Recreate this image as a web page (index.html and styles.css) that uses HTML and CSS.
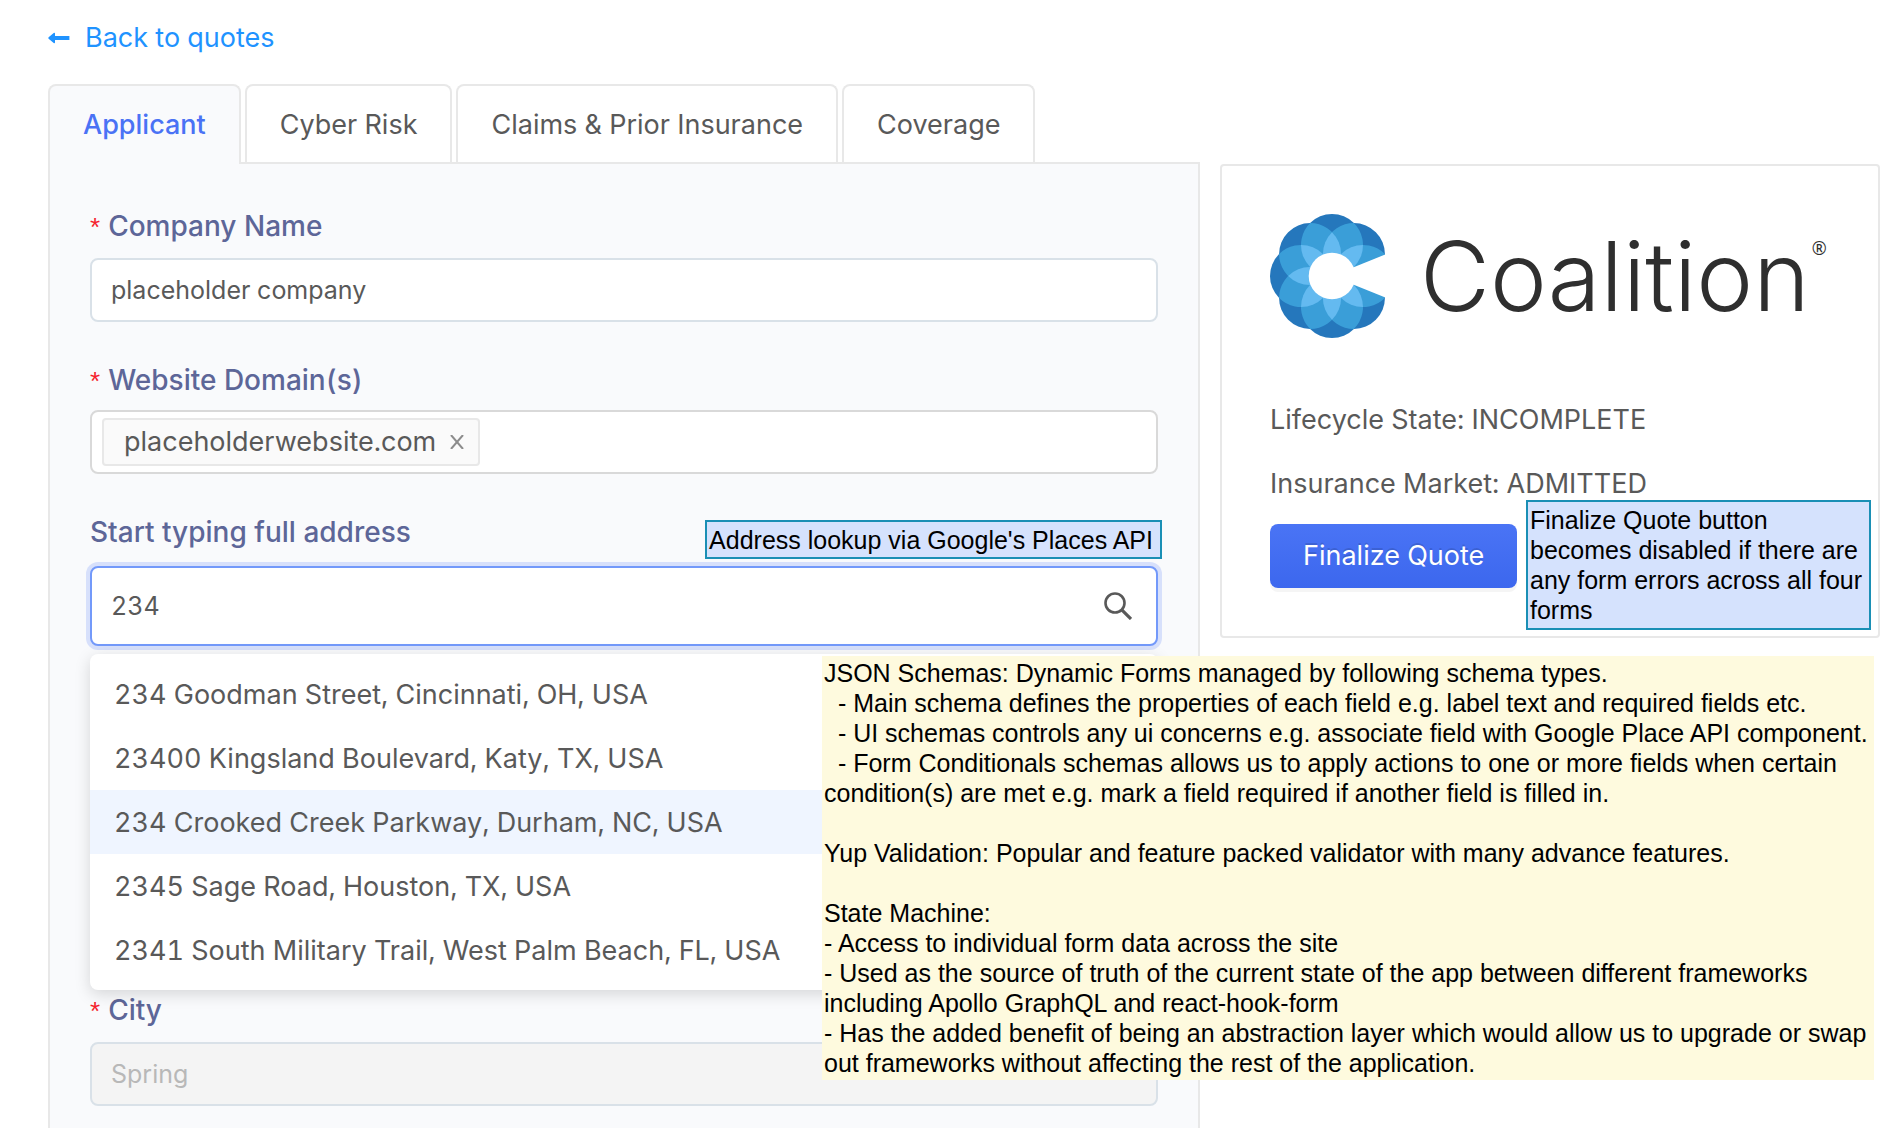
FILE: index.html
```html
<!DOCTYPE html>
<html lang="en">
<head>
<meta charset="utf-8">
<meta name="viewport" content="width=device-width, initial-scale=1">
<title>Quote application</title>
<link rel="stylesheet" href="styles.css">
</head>
<body>
<header class="page-header">
  <a class="back-link" href="#quotes">
    <svg class="back-icon" viewBox="0 0 22 12" aria-hidden="true"><path d="M6 0.8 0.6 5.2Q0 6 0.6 6.8L6 11.2Q7 11.4 7 10.4V8H21.4V4H7V1.6Q7 0.6 6 0.8Z" fill="currentColor"/></svg>
    Back to quotes
  </a>
</header>
<main class="layout">
  <section class="application">
    <nav class="tabs" role="tablist">
      <button class="tab tab-active" type="button" role="tab" aria-selected="true">Applicant</button>
      <button class="tab" type="button" role="tab" aria-selected="false">Cyber Risk</button>
      <button class="tab" type="button" role="tab" aria-selected="false">Claims &amp; Prior Insurance</button>
      <button class="tab" type="button" role="tab" aria-selected="false">Coverage</button>
    </nav>
    <form class="panel">
      <div class="field">
        <label class="label required" for="company">Company Name</label>
        <input class="control" id="company" type="text" value="placeholder company">
      </div>
      <div class="field field-domains">
        <label class="label required" for="domains">Website Domain(s)</label>
        <div class="control tag-control">
          <span class="tag">placeholderwebsite.com
            <button class="tag-remove" type="button" aria-label="Remove placeholderwebsite.com">
              <svg viewBox="0 0 14 14" aria-hidden="true"><path d="M1 0 13 14M13 0 1 14" stroke="currentColor" stroke-width="2" fill="none"/></svg>
            </button>
          </span>
          <input class="tag-input" id="domains" type="text">
        </div>
      </div>
      <div class="field field-address">
        <label class="label" for="address">Start typing full address</label>
        <div class="search-control">
          <input class="search-input" id="address" type="text" value="234">
          <svg class="search-icon" viewBox="0 0 28 28" aria-hidden="true"><circle cx="11" cy="11" r="9.5" fill="none" stroke="currentColor" stroke-width="2.6"/><path d="M17.8 17.8 27 27" stroke="currentColor" stroke-width="3.2"/></svg>
          <ul class="suggestions" role="listbox">
            <li class="suggestion" role="option">234 Goodman Street, Cincinnati, OH, USA</li>
            <li class="suggestion" role="option">23400 Kingsland Boulevard, Katy, TX, USA</li>
            <li class="suggestion suggestion-active" role="option">234 Crooked Creek Parkway, Durham, NC, USA</li>
            <li class="suggestion" role="option">2345 Sage Road, Houston, TX, USA</li>
            <li class="suggestion" role="option">2341 South Military Trail, West Palm Beach, FL, USA</li>
          </ul>
        </div>
        <p class="note note-blue note-address">Address lookup via Google's Places API</p>
      </div>
      <div class="field">
        <label class="label required" for="city">City</label>
        <input class="control" id="city" type="text" value="Spring" disabled>
      </div>
    </form>
  </section>
  <aside class="summary">
    <div class="logo">
      <svg class="logo-mark" viewBox="-62 -62 124 124" aria-hidden="true">
        <defs>
          <circle id="petal" cx="31" cy="0" r="31"/>
          <path id="overlap" d="M0 0A31 31 0 0 1 57.28 0A31 31 0 0 1 0 0Z"/>
          <path id="core" d="M0 0A31 31 0 0 1 43.84 0A31 31 0 0 1 0 0Z"/>
        </defs>
        <g fill="#2577bc">
          <use href="#petal" transform="rotate(45)"/><use href="#petal" transform="rotate(90)"/><use href="#petal" transform="rotate(135)"/><use href="#petal" transform="rotate(180)"/><use href="#petal" transform="rotate(225)"/><use href="#petal" transform="rotate(270)"/><use href="#petal" transform="rotate(315)"/>
        </g>
        <g fill="#3a9ed8">
          <use href="#overlap" transform="rotate(22.5)"/><use href="#overlap" transform="rotate(67.5)"/><use href="#overlap" transform="rotate(112.5)"/><use href="#overlap" transform="rotate(157.5)"/><use href="#overlap" transform="rotate(202.5)"/><use href="#overlap" transform="rotate(247.5)"/><use href="#overlap" transform="rotate(292.5)"/><use href="#overlap" transform="rotate(337.5)"/>
        </g>
        <g fill="#64baf0">
          <use href="#core" transform="rotate(45)"/><use href="#core" transform="rotate(90)"/><use href="#core" transform="rotate(135)"/><use href="#core" transform="rotate(180)"/><use href="#core" transform="rotate(225)"/><use href="#core" transform="rotate(270)"/><use href="#core" transform="rotate(315)"/>
        </g>
        <circle r="23.3" fill="#fff"/>
        <path d="M0 0 70 -28.3V28.3Z" fill="#fff"/>
      </svg>
      <span class="logo-name">Coalition</span><span class="logo-reg">®</span>
    </div>
    <p class="fact">Lifecycle State: INCOMPLETE</p>
    <p class="fact">Insurance Market: ADMITTED</p>
    <button class="finalize" type="button">Finalize Quote</button>
    <p class="note note-blue note-finalize">Finalize Quote button becomes disabled if there are any form errors across all four forms</p>
  </aside>
  <div class="note note-yellow">JSON Schemas: Dynamic Forms managed by following schema types.
  - Main schema defines the properties of each field e.g. label text and required fields etc.
  - UI schemas controls any ui concerns e.g. associate field with Google Place API component.
  - Form Conditionals schemas allows us to apply actions to one or more fields when certain condition(s) are met e.g. mark a field required if another field is filled in.

Yup Validation: Popular and feature packed validator with many advance features.

State Machine:
- Access to individual form data across the site
- Used as the source of truth of the current state of the app between different frameworks including Apollo GraphQL and react-hook-form
- Has the added benefit of being an abstraction layer which would allow us to upgrade or swap out frameworks without affecting the rest of the application.</div>
</main>
</body>
</html>
```
FILE: styles.css
```css
* { box-sizing: border-box; }

body {
  margin: 0;
  min-height: 100vh;
  display: flex;
  flex-direction: column;
  background: #fff;
  color: #595959;
  font-family: Inter, "Open Sans", sans-serif;
  font-size: 27px;
  font-variant-numeric: tabular-nums;
  line-height: 44px;
}

button, input {
  font: inherit;
  font-variant-numeric: tabular-nums;
  color: inherit;
}

p, ul { margin: 0; padding: 0; }

.page-header { display: flex; padding: 16px 48px 24px; }

.back-link {
  display: flex;
  align-items: center;
  gap: 15px;
  color: #1f93ff;
  text-decoration: none;
}

.back-icon { width: 22px; height: 12px; }

.layout {
  position: relative;
  flex: 1;
  display: grid;
  grid-template-columns: minmax(0, 96fr) minmax(0, 55fr);
  gap: 20px;
  padding: 0 18px 0 48px;
}

.application { display: flex; flex-direction: column; }

/* Tabs */
.tabs { display: flex; gap: 4px; }

.tab {
  height: 78px;
  padding: 2px 33px 0;
  border: 2px solid #e8e8e8;
  border-bottom: 0;
  border-radius: 8px 8px 0 0;
  background: #fff;
  white-space: nowrap;
}

.tab-active {
  position: relative;
  height: 80px;
  margin-bottom: -2px;
  padding-top: 0;
  background: #f9fafc;
  color: #4a72f5;
  font-weight: 500;
}

/* Form */
.panel {
  flex: 1;
  padding: 40px 40px 22px;
  border: 2px solid #e8e8e8;
  border-bottom: 0;
  background: #f9fafc;
}

.field { display: flex; flex-direction: column; gap: 10px; }
.field-domains { margin-top: 36px; gap: 8px; }
.field-address { position: relative; margin: 36px 0 342px; gap: 12px; }

.label { height: 44px; color: #5d6698; font-size: 28px; font-weight: 500; }

.required::before {
  content: "*";
  margin-right: 8px;
  color: #f5222d;
  font-family: "Liberation Sans", Arial, sans-serif;
  font-size: 26px;
  font-weight: 400;
  line-height: 1;
}

.control {
  width: 100%;
  height: 64px;
  padding: 0 19px;
  border: 2px solid #d9e1e8;
  border-radius: 8px;
  background: #fff;
  font-size: 25px;
}

.control:disabled { background: #f4f4f4; color: #b8b8b8; }

.tag-control {
  display: flex;
  align-items: center;
  padding: 0 10px;
  border-color: #d9d9d9;
  font-size: 27px;
}

.tag {
  display: flex;
  align-items: center;
  gap: 14px;
  height: 48px;
  padding: 0 14px 0 20px;
  border: 2px solid #e8e8e8;
  border-radius: 4px;
  background: #fafafa;
}

.tag-remove {
  display: flex;
  padding: 0;
  border: 0;
  background: none;
  color: #8c8c8c;
}

.tag-remove svg { width: 14px; height: 14px; }

.tag-input {
  flex: 1;
  min-width: 0;
  border: 0;
  outline: 0;
  background: none;
}

.search-control {
  position: relative;
  display: flex;
  align-items: center;
  height: 80px;
  padding: 0 24px 0 19px;
  border: 2px solid #7399fa;
  border-radius: 8px;
  background: #fff;
  box-shadow: 0 0 0 4px #d7e0fb;
}

.search-input {
  flex: 1;
  min-width: 0;
  padding: 0;
  border: 0;
  outline: 0;
  background: none;
  font-size: 25px;
}

.search-icon { width: 28px; height: 28px; }

.suggestions {
  position: absolute;
  top: 86px;
  left: -2px;
  right: -2px;
  padding: 8px 0;
  border-radius: 8px;
  background: #fff;
  box-shadow: 0 4px 16px rgba(0, 0, 0, 0.15);
  list-style: none;
}

.suggestion { padding: 11px 24px 9px; }
.suggestion-active { background: #eff5ff; }

/* Summary card */
.summary {
  position: relative;
  align-self: start;
  margin-top: 80px;
  padding: 48px;
  border: 2px solid #e8e8e8;
  border-radius: 4px;
}

.logo {
  display: flex;
  align-items: center;
  height: 124px;
  margin-bottom: 50px;
  color: #2f2f2f;
}

.logo-mark { flex: none; width: 124px; height: 124px; }

.logo-name {
  margin-left: 26px;
  font-family: Inter, sans-serif;
  font-size: 96px;
  font-weight: 300;
  line-height: 120px;
}

.logo-reg {
  align-self: flex-start;
  margin: 22px 0 0 2px;
  font-family: "Open Sans", sans-serif;
  font-size: 18px;
  line-height: 24px;
}

.fact { padding: 1px 0; line-height: 62px; }

.finalize {
  display: block;
  height: 64px;
  margin-top: 8px;
  padding: 0 33px;
  border: 0;
  border-radius: 8px;
  background: linear-gradient(#4a74f5, #3c67ee);
  box-shadow: 0 4px 0 #f5f5f5;
  color: #fff;
  text-shadow: 0 -2px 0 rgba(0, 0, 0, 0.12);
  white-space: nowrap;
}

/* Annotations laid over the page */
.note {
  position: absolute;
  color: #000;
  font-family: "Liberation Sans", Arial, sans-serif;
  font-size: 25px;
  line-height: 30px;
}

.note-blue {
  border: 2px solid #1a8fb5;
  background: #d5e2fd;
}

.note-address {
  top: 10px;
  right: -4px;
  padding: 3px 7px 2px 2px;
  white-space: nowrap;
}

.note-finalize {
  right: 7px;
  bottom: 6px;
  width: 345px;
  padding: 3px 2px;
}

.note-yellow {
  top: 572px;
  right: 24px;
  width: 1052px;
  padding: 2px;
  background: #fefade;
  white-space: pre-wrap;
}
```
